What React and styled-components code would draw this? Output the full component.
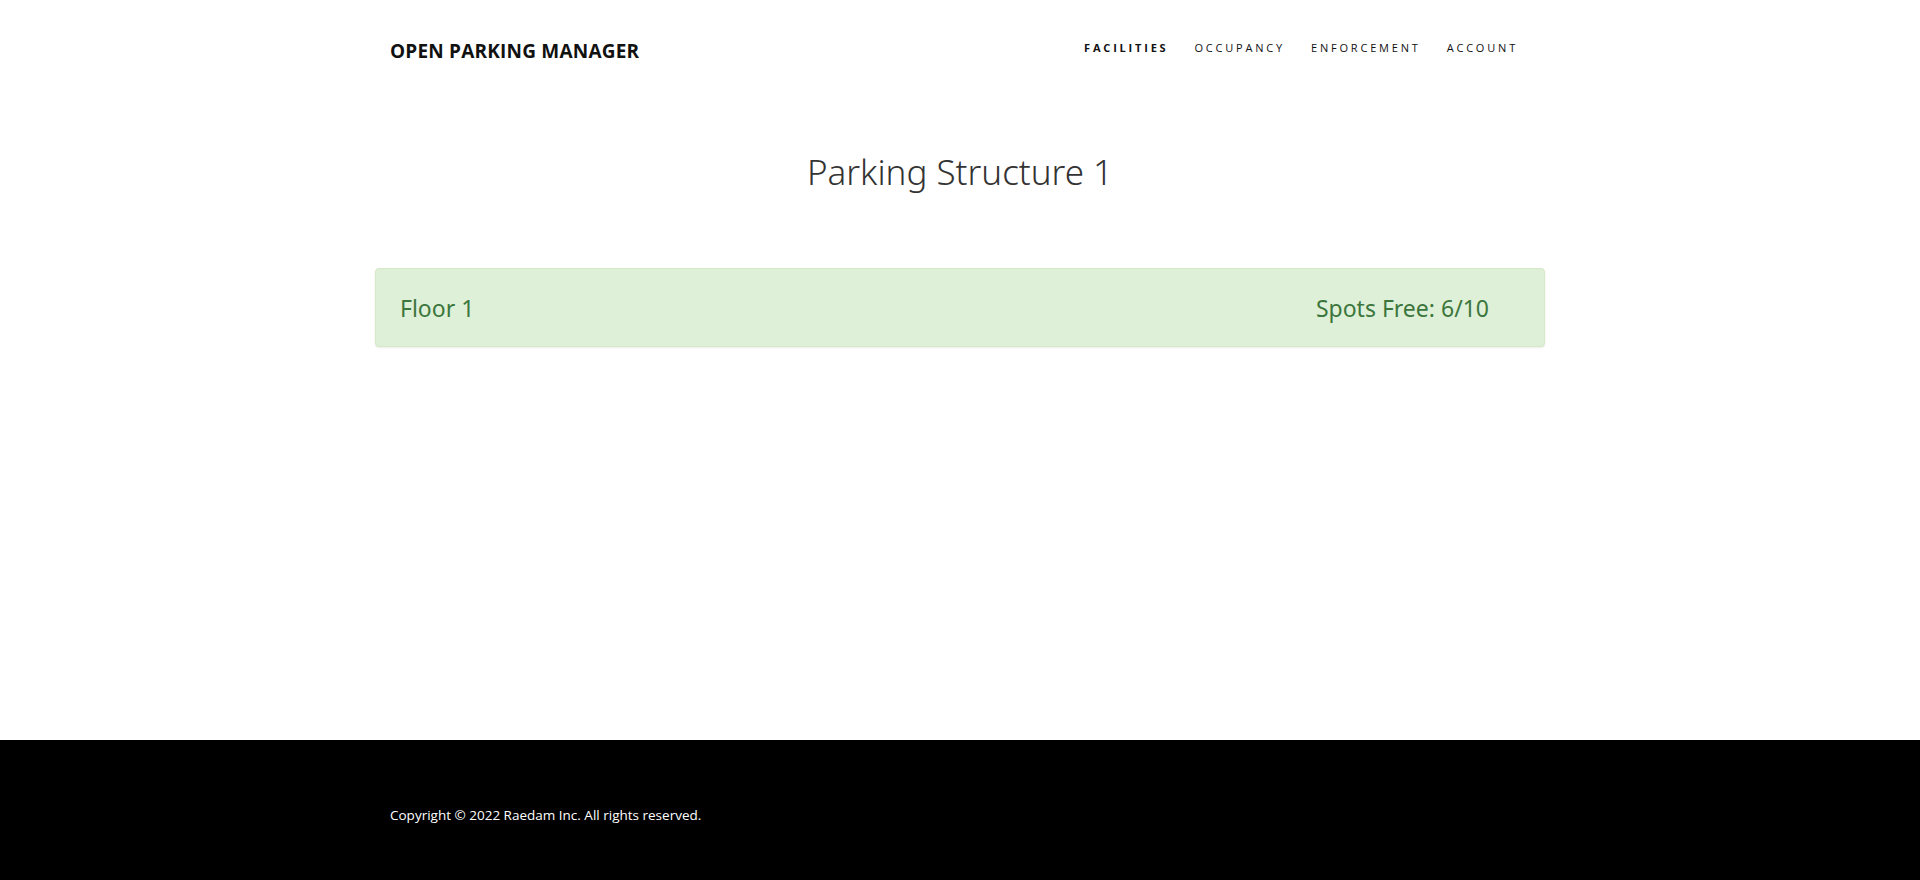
import React from 'react'
import styled, { createGlobalStyle } from 'styled-components'

const GlobalStyle = createGlobalStyle`
  html, body {
    margin: 0;
    padding: 0;
    background: #fff;
  }
  #root {
    min-height: 880px;
    display: flex;
    flex-direction: column;
  }
`

const floors = [{ name: 'Floor 1', free: 6, total: 10 }]

const App = () => {
  return (
    <>
      <GlobalStyle />
      <Header>
        <Brand>OPEN PARKING MANAGER</Brand>
        <Nav>
          <NavLink $active>FACILITIES</NavLink>
          <NavLink>OCCUPANCY</NavLink>
          <NavLink>ENFORCEMENT</NavLink>
          <NavLink>ACCOUNT</NavLink>
        </Nav>
      </Header>
      <Main>
        <Title>Parking Structure 1</Title>
        {floors.map((f) => (
          <FloorCard key={f.name}>
            <FloorName>{f.name}</FloorName>
            <Spots>Spots Free: {f.free}/{f.total}</Spots>
          </FloorCard>
        ))}
      </Main>
      <Footer>
        <FooterInner>
          <Copy>Copyright © 2022 Raedam Inc. All rights reserved.</Copy>
        </FooterInner>
      </Footer>
    </>
  )
}

export default App

const Header = styled.header`
  width: 1140px;
  margin: 0 auto;
  height: 100px;
  display: flex;
  align-items: center;
  justify-content: space-between;
  box-sizing: border-box;
`

const Brand = styled.div`
  font-family: "Open Sans", sans-serif;
  font-weight: 700;
  font-size: 19px;
  letter-spacing: 0.2px;
  color: #111;
  margin-top: 1px;
`

const Nav = styled.nav`
  display: flex;
  gap: 26px;
  margin-right: 12px;
  margin-top: -6px;
`

const NavLink = styled.a`
  font-family: "Open Sans", sans-serif;
  font-size: 11px;
  font-weight: ${(p) => (p.$active ? 700 : 500)};
  letter-spacing: 2.8px;
  color: #111;
  cursor: pointer;
`

const Main = styled.main`
  flex: 1;
  width: 1170px;
  margin: 0 auto;
  display: flex;
  flex-direction: column;
`

const Title = styled.h1`
  font-family: "Noto Sans", sans-serif;
  font-weight: 300;
  font-size: 35px;
  color: #333;
  text-align: center;
  margin: 48px 0 73px;
`

const FloorCard = styled.div`
  display: flex;
  align-items: center;
  justify-content: space-between;
  height: 79px;
  box-sizing: border-box;
  padding: 0 55px 0 24px;
  background: #dff0d8;
  border: 1px solid #d6e9c6;
  border-radius: 4px;
  box-shadow: 0 1px 2px rgba(0, 0, 0, 0.08);
  color: #3c763d;
  font-family: "Noto Sans", sans-serif;
  font-size: 23px;
`

const FloorName = styled.span``

const Spots = styled.span``

const Footer = styled.footer`
  background: #000;
  height: 140px;
`

const FooterInner = styled.div`
  width: 1140px;
  margin: 0 auto;
  padding-top: 66px;
`

const Copy = styled.p`
  margin: 0;
  font-family: "Open Sans", sans-serif;
  font-size: 13.5px;
  color: #fff;
`
